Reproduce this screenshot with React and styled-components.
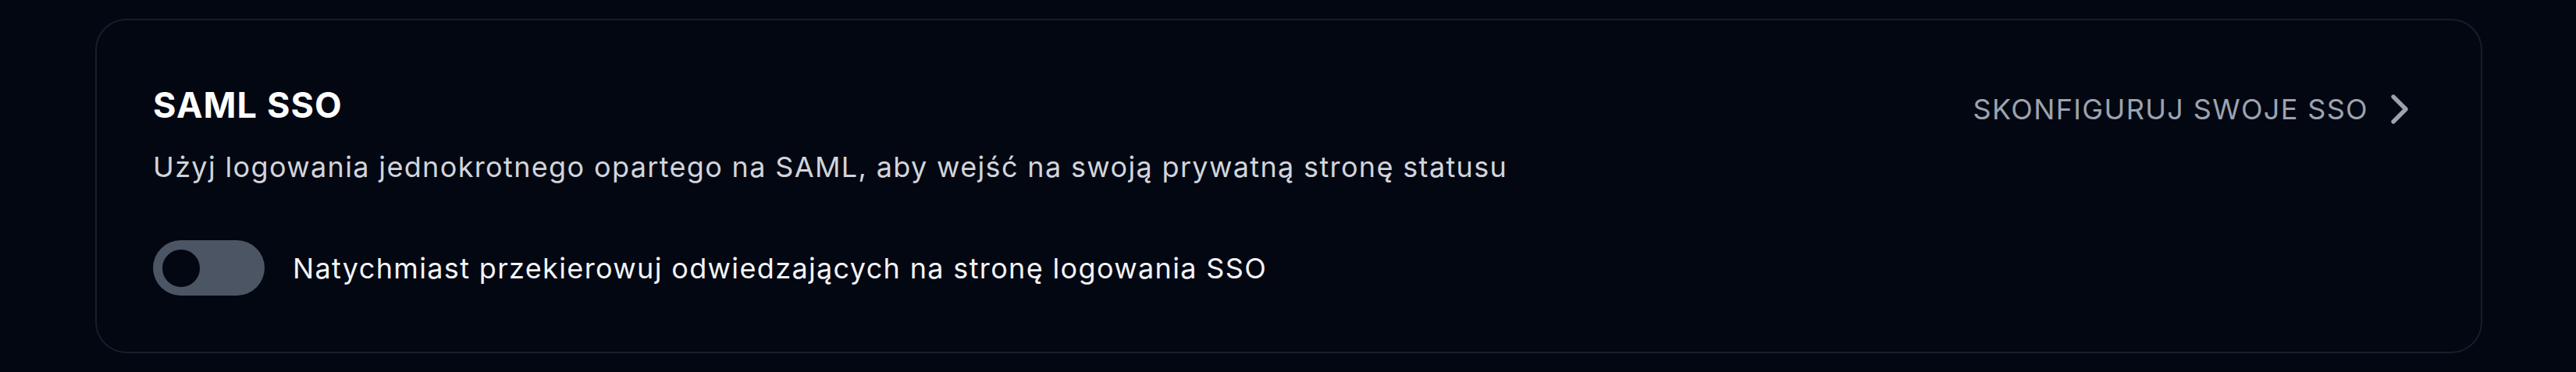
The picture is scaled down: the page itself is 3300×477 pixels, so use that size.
import React, { useState } from "react";
import styled, { createGlobalStyle } from "styled-components";

const GlobalStyle = createGlobalStyle`
  html, body {
    margin: 0;
    padding: 0;
    background: #030712;
  }
  body {
    font-family: Inter, "Noto Sans", "Liberation Sans", sans-serif;
    -webkit-font-smoothing: antialiased;
  }
  * { box-sizing: border-box; }
`;

const Page = styled.div`
  padding: 24px 120px 24px 122px;
  background: #030712;
  min-height: 477px;
`;

const Card = styled.section`
  border: 2px solid #171d2a;
  border-radius: 40px;
  background: #030712;
  padding: 82px 72px 72px 72px;
  display: flex;
  flex-direction: column;
`;

const Header = styled.div`
  display: flex;
  justify-content: space-between;
  align-items: flex-start;
`;

const TitleBlock = styled.div`
  display: flex;
  flex-direction: column;
`;

const Title = styled.h2`
  margin: 0;
  font-size: 45px;
  line-height: 54px;
  font-weight: 700;
  color: #ffffff;
  letter-spacing: 1.1px;
`;

const Description = styled.p`
  margin: 25px 0 0;
  font-size: 36px;
  line-height: 54px;
  font-weight: 400;
  color: #d1d5db;
  letter-spacing: 1.35px;
`;

const ConfigLink = styled.a`
  display: flex;
  align-items: center;
  gap: 8px;
  margin-top: 0;
  height: 64px;
  font-size: 36px;
  line-height: 54px;
  color: #9ca3af;
  letter-spacing: 1.35px;
  text-transform: uppercase;
  text-decoration: none;
  cursor: pointer;
`;

const ToggleRow = styled.label`
  display: flex;
  align-items: center;
  gap: 36px;
  margin-top: 67px;
  cursor: pointer;
`;

const Track = styled.span`
  position: relative;
  display: block;
  flex: none;
  width: 143px;
  height: 71px;
  border-radius: 36px;
  background: ${(p) => (p.$on ? "#22c55e" : "#4b5563")};
  transition: background 0.2s;
`;

const Knob = styled.span`
  position: absolute;
  top: 11.5px;
  left: ${(p) => (p.$on ? "83px" : "12px")};
  width: 48px;
  height: 48px;
  border-radius: 50%;
  background: #030712;
  transition: left 0.2s;
`;

const ToggleLabel = styled.span`
  font-size: 36px;
  line-height: 54px;
  color: #f3f4f6;
  letter-spacing: 1.35px;
`;

const Chevron = () => (
  <svg
    width="64"
    height="64"
    viewBox="0 0 24 24"
    fill="none"
    stroke="currentColor"
    strokeWidth="2"
    strokeLinecap="round"
    strokeLinejoin="round"
  >
    <path d="m9 18 6-6-6-6" />
  </svg>
);

export default function App() {
  const [on, setOn] = useState(false);
  return (
    <>
      <GlobalStyle />
      <Page>
        <Card>
          <Header>
            <TitleBlock>
              <Title>SAML SSO</Title>
              <Description>
                Użyj logowania jednokrotnego opartego na SAML, aby wejść na swoją
                prywatną stronę statusu
              </Description>
            </TitleBlock>
            <ConfigLink>
              Skonfiguruj swoje SSO
              <Chevron />
            </ConfigLink>
          </Header>
          <ToggleRow onClick={() => setOn(!on)}>
            <Track $on={on}>
              <Knob $on={on} />
            </Track>
            <ToggleLabel>
              Natychmiast przekierowuj odwiedzających na stronę logowania SSO
            </ToggleLabel>
          </ToggleRow>
        </Card>
      </Page>
    </>
  );
}
